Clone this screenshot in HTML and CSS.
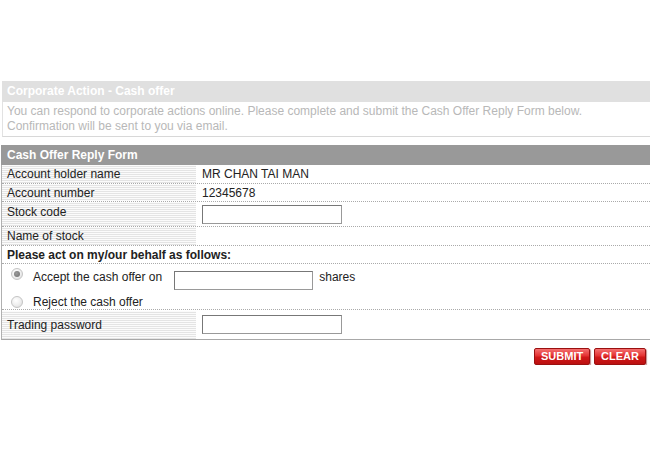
FILE: index.html
```html
<!DOCTYPE html>
<html>
<head>
<meta charset="utf-8">
<link rel="stylesheet" href="styles.css">
</head>
<body>
<div class="page">
  <div class="title">Corporate Action - Cash offer</div>
  <div class="intro">You can respond to corporate actions online. Please complete and submit the Cash Offer Reply Form below.<br>Confirmation will be sent to you via email.</div>
  <div class="form">
    <div class="form-head">Cash Offer Reply Form</div>
    <div class="row r1"><div class="label">Account holder name</div><div class="value">MR CHAN TAI MAN</div></div>
    <div class="row r2"><div class="label">Account number</div><div class="value">12345678</div></div>
    <div class="row r3"><div class="label">Stock code</div><div class="value"><input class="field" type="text"></div></div>
    <div class="row r4"><div class="label">Name of stock</div><div class="value"></div></div>
    <div class="row r5 full"><div class="instr">Please act on my/our behalf as follows:</div></div>
    <div class="row r6 full choice nodiv"><input class="radio" type="radio" name="act" checked><span class="opt">Accept the cash offer on</span><input class="field field-sm" type="text"><span class="unit">shares</span></div>
    <div class="row r7 full choice"><input class="radio" type="radio" name="act"><span class="opt">Reject the cash offer</span></div>
    <div class="row r8 last"><div class="label">Trading password</div><div class="value"><input class="field" type="password"></div></div>
  </div>
  <div class="actions">
    <button class="btn btn-submit" type="button">SUBMIT</button>
    <button class="btn btn-clear" type="button">CLEAR</button>
  </div>
</div>
</body>
</html>
```
FILE: styles.css
```css
html, body {
  margin: 0;
  padding: 0;
  background: #fff;
}
body {
  font-family: "Liberation Sans", Arial, sans-serif;
  font-size: 12px;
  color: #222;
}
.page {
  width: 650px;
  padding-top: 81px;
}
.title {
  margin-left: 2px;
  height: 21px;
  line-height: 21px;
  background: #e0e0e0;
  color: #fff;
  font-weight: bold;
  font-size: 12px;
  padding-left: 5px;
}
.intro {
  margin-left: 2px;
  border-left: 1px solid #e2e2e2;
  border-bottom: 1px solid #d8d8d8;
  color: #b8b8b8;
  line-height: 15px;
  padding: 2px 0 2px 4px;
}
.form {
  margin-top: 8px;
  margin-left: 1px;
  border-left: 1px solid #b0b0b0;
  border-bottom: 1px solid #a8a8a8;
}
.form-head {
  height: 20px;
  line-height: 20px;
  background: #999;
  color: #fff;
  font-weight: bold;
  font-size: 12px;
  padding-left: 6px;
  margin-left: -1px;
}
.row {
  display: flex;
  align-items: stretch;
  border-bottom: 1px dotted #aaa;
  color: #222;
}
.row.last {
  border-bottom: none;
}
.row.nodiv {
  border-bottom: none;
}
.label {
  width: 189px;
  padding-left: 5px;
  display: flex;
  align-items: center;
  background: repeating-linear-gradient(to bottom, #fbfbfb 0, #fbfbfb 1px, #e4e4e4 1px, #e4e4e4 2px);
}
.value {
  flex: 1;
  display: flex;
  align-items: center;
  padding-left: 6px;
}
.r1 { height: 18px; }
.r2 { height: 17px; }
.r3 { height: 24px; }
.r3 .label { padding-bottom: 4px; }
.r4 { height: 18px; }
.r5 { height: 17px; }
.r6 { height: 30px; }
.r7 { height: 15px; }
.r8 { height: 29px; }
.r8 .label { margin-top: 1px; }
.instr {
  padding-left: 5px;
  font-weight: bold;
  display: flex;
  align-items: center;
}
.choice {
  align-items: flex-start;
}
.opt {
  line-height: 14px;
}
.r6 .radio { margin-top: 4px; }
.r6 .opt { margin-top: 6px; }
.r6 .field-sm { margin-top: 7px; }
.r6 .unit { margin-top: 6px; line-height: 14px; }
.r7 .radio { margin-top: 2px; }
.r7 .opt { margin-top: 1px; }
.field {
  box-sizing: border-box;
  width: 140px;
  height: 19px;
  margin: 0;
  border: 1px solid #777;
  border-right-color: #999;
  border-bottom-color: #999;
  background: #fff;
  padding: 0 2px;
  font: inherit;
}
.field-sm {
  width: 139px;
  margin-left: 12px;
}
.unit {
  margin-left: 6px;
}
.radio {
  appearance: none;
  -webkit-appearance: none;
  box-sizing: border-box;
  width: 12px;
  height: 12px;
  margin: 0 10px 0 9px;
  border-radius: 50%;
  border: 1px solid #c4c4c4;
  background: radial-gradient(circle at 40% 35%, #fff 0, #f1f1f1 45%, #d8d8d8 100%);
  display: inline-block;
  position: relative;
  flex: none;
}
.radio:checked::after {
  content: "";
  position: absolute;
  left: 2px;
  top: 2px;
  width: 6px;
  height: 6px;
  border-radius: 50%;
  background: radial-gradient(circle at 40% 40%, #9a9a9a 0, #6e6e6e 100%);
}
.actions {
  display: flex;
  justify-content: flex-end;
  gap: 4px;
  padding: 8px 4px 0 0;
}
.btn {
  box-sizing: border-box;
  height: 17px;
  margin: 0;
  padding: 0 6px;
  border: 1px solid #9a1010;
  border-radius: 2px;
  background: linear-gradient(to bottom, #f47070 0, #e43232 45%, #d01818 55%, #bb1010 100%);
  color: #fff;
  font-family: "Liberation Sans", Arial, sans-serif;
  font-weight: bold;
  font-size: 11px;
  line-height: 15px;
  box-shadow: 1px 1px 1px rgba(120, 0, 0, 0.45);
  cursor: pointer;
}
.btn-submit { width: 56px; }
.btn-clear { width: 52px; }
```
